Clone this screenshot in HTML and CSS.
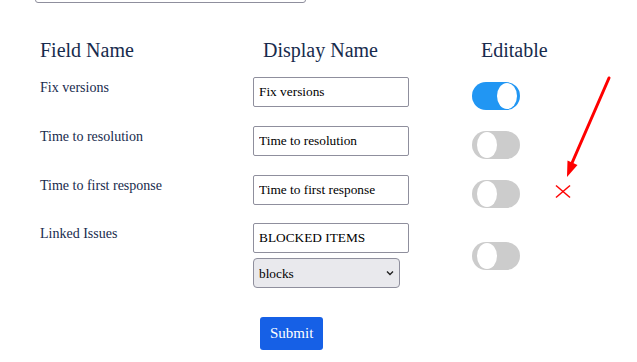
FILE: index.html
```html
<!DOCTYPE html>
<html>
<head>
<meta charset="utf-8">
<link rel="stylesheet" href="styles.css">
</head>
<body>
<div class="page">
  <div class="top-input"></div>
  <div class="grid head">
    <div class="th">Field Name</div>
    <div class="th th-display">Display Name</div>
    <div class="th th-edit">Editable</div>
  </div>
  <div class="grid row">
    <div class="label">Fix versions</div>
    <div class="cell"><input class="text" type="text" value="Fix versions"></div>
    <div class="cell"><span class="toggle on"><span class="knob"></span></span></div>
  </div>
  <div class="grid row">
    <div class="label">Time to resolution</div>
    <div class="cell"><input class="text" type="text" value="Time to resolution"></div>
    <div class="cell"><span class="toggle"><span class="knob"></span></span></div>
  </div>
  <div class="grid row">
    <div class="label">Time to first response</div>
    <div class="cell"><input class="text" type="text" value="Time to first response"></div>
    <div class="cell"><span class="toggle"><span class="knob"></span></span></div>
  </div>
  <div class="grid row row-linked">
    <div class="label">Linked Issues</div>
    <div class="cell stack">
      <input class="text" type="text" value="BLOCKED ITEMS">
      <span class="select-wrap">
        <select class="select"><option>blocks</option></select>
        <svg class="chev" width="8" height="6" viewBox="0 0 8 6"><path d="M1 1.5 L4 4.5 L7 1.5" fill="none" stroke="#222" stroke-width="1.4"/></svg>
      </span>
    </div>
    <div class="cell center"><span class="toggle"><span class="knob"></span></span></div>
  </div>
  <div class="footer">
    <button class="submit">Submit</button>
  </div>
</div>
<svg class="annot" width="637" height="362" viewBox="0 0 637 362">
  <line x1="609" y1="78" x2="572" y2="163" stroke="#ff0000" stroke-width="3" stroke-linecap="round"/>
  <polygon points="567,177 577.5,165 567.5,160.5" fill="#ff0000"/>
  <line x1="556" y1="185.5" x2="570" y2="197.5" stroke="#ff0000" stroke-width="1.5"/>
  <line x1="570" y1="185.5" x2="556" y2="197.5" stroke="#ff0000" stroke-width="1.5"/>
</svg>
</body>
</html>
```

FILE: styles.css
```css
html, body {
  margin: 0;
  padding: 0;
  background: #ffffff;
}
body {
  font-family: "Liberation Serif", "Times New Roman", serif;
  color: #172b4d;
  width: 637px;
  height: 362px;
  overflow: hidden;
  position: relative;
}
.page {
  padding-left: 35px;
}
.top-input {
  width: 271px;
  height: 30px;
  box-sizing: border-box;
  border: 1px solid #8f8f9d;
  border-radius: 3px;
  margin-top: -27px;
}
.grid {
  display: grid;
  grid-template-columns: 213px 219px 83px;
  margin-left: 5px;
}
.head {
  margin-top: 36px;
}
.th {
  font-size: 20px;
  line-height: 23px;
}
.th-display { padding-left: 10px; }
.th-edit { padding-left: 9px; }
.row {
  margin-top: 15px;
  align-items: start;
}
.row + .row { margin-top: 16px; }
.row-linked { margin-top: 15px !important; }
.label {
  font-size: 14px;
  padding-top: 3px;
}
.cell { display: flex; }
.stack {
  flex-direction: column;
  gap: 5px;
}
.center { align-self: center; }
.text {
  width: 156px;
  height: 30px;
  box-sizing: border-box;
  border: 1px solid #8f8f9d;
  border-radius: 2px;
  padding: 0 5px;
  margin: 0;
  font-family: "Liberation Serif", "Times New Roman", serif;
  font-size: 13.333px;
  color: #000;
  background: #fff;
  outline: none;
}
.select-wrap {
  position: relative;
  width: 147px;
  height: 30px;
}
.select {
  appearance: none;
  -webkit-appearance: none;
  width: 147px;
  height: 30px;
  box-sizing: border-box;
  border: 1px solid #8f8f9d;
  border-radius: 4px;
  background: #e9e9ed;
  padding: 0 5px;
  margin: 0;
  font-family: "Liberation Serif", "Times New Roman", serif;
  font-size: 13.333px;
  color: #000;
}
.chev {
  position: absolute;
  right: 6px;
  top: 12px;
}
.toggle {
  position: relative;
  display: inline-block;
  width: 48px;
  height: 28px;
  border-radius: 14px;
  background: #cccccc;
}
.row .cell .toggle { margin-top: 5px; }
.center .toggle { margin-top: 0 !important; }
.toggle.on { background: #2196f3; }
.knob {
  position: absolute;
  top: 1px;
  left: 5px;
  width: 20px;
  height: 26px;
  border-radius: 50%;
  background: #fff;
}
.toggle.on .knob { left: 25px; }
.footer {
  padding-left: 225px;
  margin-top: 29px;
}
.submit {
  background: #1660e6;
  color: #fff;
  border: none;
  border-radius: 3px;
  font-family: "Liberation Serif", "Times New Roman", serif;
  font-size: 15px;
  height: 33px;
  padding: 0 10px;
  margin: 0;
}
.annot {
  position: absolute;
  left: 0;
  top: 0;
  pointer-events: none;
}
```
